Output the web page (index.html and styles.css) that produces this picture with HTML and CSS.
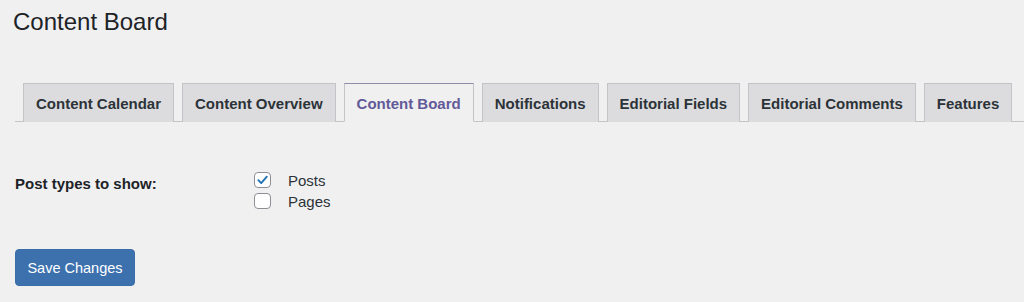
FILE: index.html
```html
<!DOCTYPE html>
<html>
<head>
<meta charset="utf-8">
<link rel="stylesheet" href="styles.css">
</head>
<body>
<div class="wrap">
  <h1 class="title">Content Board</h1>
  <nav class="tabs">
    <a class="tab">Content Calendar</a>
    <a class="tab">Content Overview</a>
    <a class="tab active">Content Board</a>
    <a class="tab">Notifications</a>
    <a class="tab">Editorial Fields</a>
    <a class="tab">Editorial Comments</a>
    <a class="tab">Features</a>
  </nav>
  <div class="form-row">
    <div class="label">Post types to show:</div>
    <div class="options">
      <label class="opt">
        <span class="box checked">
          <svg viewBox="0 0 16 16" width="16" height="16"><polyline points="3.6,8.2 6.6,11.3 12.6,4.4" fill="none" stroke="#2271b1" stroke-width="2" stroke-linecap="round" stroke-linejoin="round"/></svg>
        </span>
        <span class="opt-text">Posts</span>
      </label>
      <label class="opt">
        <span class="box"></span>
        <span class="opt-text">Pages</span>
      </label>
    </div>
  </div>
  <button class="save">Save Changes</button>
</div>
</body>
</html>
```

FILE: styles.css
```css
html, body {
  margin: 0;
  padding: 0;
  background: #f0f0f1;
}
body {
  font-family: "Liberation Sans", Arial, sans-serif;
  color: #1d2327;
  height: 302px;
  overflow: hidden;
}
.wrap {
  padding: 0 0 0 15px;
}
.title {
  margin: 0 0 0 -2px;
  padding: 7px 0 0 0;
  font-size: 24px;
  font-weight: 400;
  line-height: 30px;
  color: #1d2327;
}
.tabs {
  display: flex;
  margin-top: 46px;
  padding-left: 8px;
  border-bottom: 1px solid #c3c4c7;
  height: 38px;
  gap: 8px;
}
.tab {
  display: flex;
  align-items: center;
  box-sizing: border-box;
  height: 39px;
  padding: 1px 12px 0;
  background: #dcdcde;
  border: 1px solid #c3c4c7;
  border-bottom: none;
  font-size: 15px;
  font-weight: 700;
  color: #2c3338;
  white-space: nowrap;
}
.tab.active {
  background: #f0f0f1;
  color: #625a98;
  border-top-color: #8f8ba8;
  margin-bottom: -1px;
  border-bottom: 1px solid #f0f0f1;
}
.form-row {
  display: grid;
  grid-template-columns: 239px 1fr;
  margin-top: 50px;
}
.label {
  font-size: 15px;
  font-weight: 700;
  line-height: 20px;
  padding-top: 2px;
  color: #1d2327;
}
.options {
  display: flex;
  flex-direction: column;
  gap: 5px;
}
.opt {
  display: flex;
  align-items: center;
  height: 16px;
}
.box {
  box-sizing: border-box;
  width: 17px;
  height: 16px;
  border: 1px solid #8c8f94;
  border-radius: 4px;
  background: #fff;
  display: flex;
  align-items: center;
  justify-content: center;
}
.box svg {
  display: block;
}
.opt-text {
  margin-left: 17px;
  font-size: 15px;
  color: #2c3338;
}
.save {
  display: block;
  margin-top: 40px;
  width: 120px;
  height: 37px;
  padding: 0;
  border: 1px solid #3a6ea8;
  border-radius: 4px;
  background: #3c71ae;
  color: #fff;
  font-family: "Liberation Sans", Arial, sans-serif;
  font-size: 14.5px;
  font-weight: 400;
}
```
